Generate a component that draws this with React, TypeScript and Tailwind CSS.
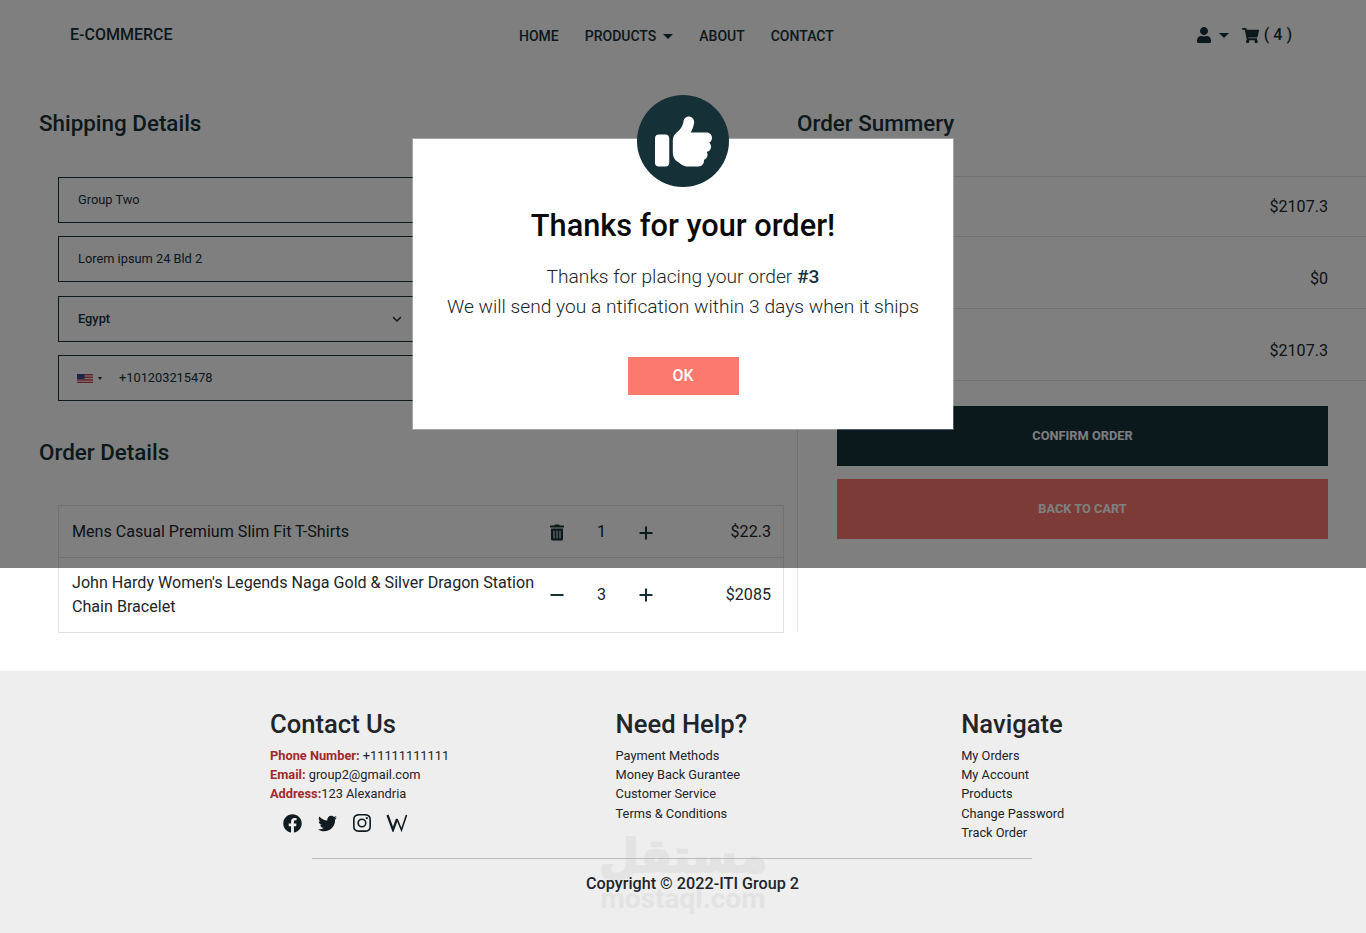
import React from 'react';
import { FaUser, FaShoppingCart, FaTrashAlt, FaFacebook, FaTwitter } from 'react-icons/fa';
import { FaThumbsUp } from 'react-icons/fa6';
import { BsInstagram } from 'react-icons/bs';

const Caret: React.FC = () => (
  <span className="ml-[7px] inline-block h-0 w-0 border-x-[5px] border-t-[5px] border-x-transparent border-t-current" />
);

const UsFlag: React.FC = () => (
  <svg width="16" height="9" viewBox="0 0 16 9">
    <rect width="16" height="9" fill="#c8424f" />
    <rect y="1.4" width="16" height="1.2" fill="#f0e4e4" />
    <rect y="4" width="16" height="1.2" fill="#f0e4e4" />
    <rect y="6.6" width="16" height="1.2" fill="#f0e4e4" />
    <rect width="7.5" height="5" fill="#3c4a8c" />
  </svg>
);

const PlusIcon: React.FC = () => (
  <svg className="shrink-0" width="14" height="14" viewBox="0 0 14 14" stroke="#163038" strokeWidth="2">
    <path d="M7 .5v13M.5 7h13" />
  </svg>
);

const MinusIcon: React.FC = () => (
  <svg className="shrink-0" width="14" height="14" viewBox="0 0 14 14" stroke="#163038" strokeWidth="2">
    <path d="M.5 7h13" />
  </svg>
);

const Field: React.FC<{ children: React.ReactNode }> = ({ children }) => (
  <div className="flex h-[46px] w-[359px] items-center border border-[#163038] pl-[19px] text-[12.8px] text-[#163038]">
    {children}
  </div>
);

const SummaryRow: React.FC<{ label: string; value: string; tall?: boolean }> = ({ label, value, tall }) => (
  <div className={`flex items-center justify-between border-t border-[#dee2e6] pl-[39px] pr-[38px] text-[16.1px] text-[#212529] ${tall ? 'h-[72px] pt-[14px]' : 'h-[60px] pt-[2px]'}`}>
    <span>{label}</span>
    <span>{value}</span>
  </div>
);

const FooterColumn: React.FC<{ title: string; items: string[] }> = ({ title, items }) => (
  <div className="w-[345.6px]">
    <h3 className="mb-[5px] text-[25.6px] leading-[34px] font-medium text-[#212529]">{title}</h3>
    <ul className="text-[12.8px] leading-[19.2px] text-[#212529]">
      {items.map(item => (
        <li key={item}>{item}</li>
      ))}
    </ul>
  </div>
);

const App: React.FC = () => {
  return (
    <div className="relative w-[1366px] bg-white font-['Roboto',sans-serif]">
      <nav className="flex h-[70px] items-center pl-[70px] pr-[74px] text-[#163038]">
        <a className="w-[449px] text-base font-medium">E-COMMERCE</a>
        <ul className="mt-[2px] flex gap-[26px] text-sm font-medium uppercase">
          <li>Home</li>
          <li className="flex items-center">Products<Caret /></li>
          <li>About</li>
          <li>Contact</li>
        </ul>
        <div className="ml-auto flex items-center">
          <FaUser className="text-[16px]" />
          <Caret />
          <FaShoppingCart className="ml-[13px] text-[17px]" />
          <span className="ml-[5px] text-base font-medium">( 4 )</span>
        </div>
      </nav>

      <main className="flex h-[562px]">
        <section className="w-[797px] pl-[39px] pt-[39px]">
          <h2 className="text-[22.4px] leading-[29px] font-medium text-[#163038]">Shipping Details</h2>
          <form className="ml-[19px] mt-[38.5px] flex flex-col gap-[13.5px]">
            <Field>Group Two</Field>
            <Field>Lorem ipsum 24 Bld 2</Field>
            <Field>
              <span className="font-medium">Egypt</span>
              <svg className="ml-auto mr-[11px]" width="16" height="16" viewBox="0 0 16 16" fill="none" stroke="#163038" strokeWidth="1.5" strokeLinecap="round" strokeLinejoin="round">
                <path d="m4.5 6.5 3.5 3.5 3.5-3.5" />
              </svg>
            </Field>
            <Field>
              <span className="-ml-px flex items-center">
                <UsFlag />
              </span>
              <span className="ml-[5px] h-0 w-0 border-x-[2px] border-t-[3px] border-x-transparent border-t-[#163038]" />
              <span className="ml-[17px]">+101203215478</span>
            </Field>
          </form>
          <h2 className="mt-[37px] text-[22.4px] leading-[29px] font-medium text-[#163038]">Order Details</h2>
          <div className="ml-[19px] mt-[38px] w-[726px] border border-[#dee2e6] text-[16.1px] text-[#212529]">
            <div className="flex h-[52px] items-center border-b border-[#dee2e6] pl-[13px] pr-[12px] pt-[2px]">
              <span className="w-[471px] shrink-0">Mens Casual Premium Slim Fit T-Shirts</span>
              <FaTrashAlt className="ml-[7px] w-[14px] shrink-0 text-[17px] text-[#163038]" />
              <span className="w-[75px] text-center">1</span>
              <PlusIcon />
              <span className="ml-auto">$22.3</span>
            </div>
            <div className="flex h-[74px] items-center pl-[13px] pr-[12px]">
              <span className="w-[471px] shrink-0 leading-6">John Hardy Women's Legends Naga Gold &amp; Silver Dragon Station Chain Bracelet</span>
              <span className="ml-[7px] flex">
                <MinusIcon />
              </span>
              <span className="w-[75px] text-center">3</span>
              <PlusIcon />
              <span className="ml-auto">$2085</span>
            </div>
          </div>
        </section>

        <section className="flex flex-1 flex-col pt-[39px]">
          <h2 className="text-[22.4px] leading-[29px] font-medium text-[#163038]">Order Summery</h2>
          <div className="mt-[38px] flex-1 border-l border-[#e5e5e5]">
            <div className="border-b border-[#dee2e6]">
              <SummaryRow label="Subtotal" value="$2107.3" />
              <SummaryRow label="Shipping" value="$0" tall />
              <SummaryRow label="Total" value="$2107.3" tall />
            </div>
            <div className="ml-[39px] mr-[38px] mt-[25px] flex flex-col gap-[13px]">
              <button className="h-[60px] bg-[#163038] text-[12.8px] font-bold uppercase text-white">Confirm Order</button>
              <button className="h-[60px] bg-[#fb776e] text-[12.8px] font-bold uppercase text-white">Back to Cart</button>
            </div>
          </div>
        </section>
      </main>

      <footer className="relative mt-[39px] h-[262px] overflow-hidden bg-[#eeeeee] pl-[270px] pt-[36px]">
        <div className="absolute left-[600px] top-[160px] flex w-[166px] flex-col items-center text-[#e3e3e3]">
          <span dir="rtl" className="font-['DejaVu_Sans',sans-serif] text-[46px] leading-[50px] font-bold [-webkit-text-stroke:2px_#e3e3e3]">مستقل</span>
          <span className="mt-[4px] whitespace-nowrap text-[28px] leading-[28px] font-bold">mostaql.com</span>
        </div>

        <div className="relative flex">
          <div className="w-[345.6px]">
            <h3 className="mb-[5px] text-[25.6px] leading-[34px] font-medium text-[#212529]">Contact Us</h3>
            <p className="text-[12.8px] leading-[19.2px] text-[#212529]"><b className="font-bold text-[#9e2a2b]">Phone Number:</b> +11111111111</p>
            <p className="text-[12.8px] leading-[19.2px] text-[#212529]"><b className="font-bold text-[#9e2a2b]">Email:</b> group2@gmail.com</p>
            <p className="text-[12.8px] leading-[19.2px] text-[#212529]"><b className="font-bold text-[#9e2a2b]">Address:</b>123 Alexandria</p>
            <div className="ml-[13px] mt-[10px] flex items-center gap-[16px] text-[19px] text-[#111c20]">
              <FaFacebook />
              <FaTwitter />
              <BsInstagram className="text-[18px]" />
              <svg className="-ml-px" width="22" height="18" viewBox="0 0 22 18" fill="none" stroke="currentColor" strokeLinejoin="miter">
                <path d="M1.5 1 7 16 11 5" strokeWidth="2.2" />
                <path d="M11 5 15.5 16 20.5 1" strokeWidth="1.6" />
              </svg>
            </div>
          </div>
          <FooterColumn title="Need Help?" items={['Payment Methods', 'Money Back Gurantee', 'Customer Service', 'Terms & Conditions']} />
          <FooterColumn title="Navigate" items={['My Orders', 'My Account', 'Products', 'Change Password', 'Track Order']} />
        </div>

        <hr className="relative ml-[42px] mt-[16px] w-[720px] border-[#bbbbbb]" />
        <p className="relative ml-[316px] mt-[13px] text-[16.2px] font-medium text-[#212529]">Copyright © 2022-ITI Group 2</p>
      </footer>

      <div className="absolute inset-x-0 top-0 flex h-[568px] items-center justify-center bg-black/50">
        <div className="relative h-[290px] w-[540px] bg-white pt-[68px] text-center shadow-[0_0_0_1px_rgba(255,255,255,0.3)]">
          <div className="absolute left-1/2 top-[-44px] flex h-[92px] w-[92px] -translate-x-1/2 items-center justify-center rounded-full bg-[#163038]">
            <FaThumbsUp className="text-[57px] text-white" />
          </div>
          <h2 className="text-[30.72px] leading-[38px] font-medium text-[#0a0a0a]">Thanks for your order!</h2>
          <div className="mt-[17px] text-[19.2px] leading-[30px] font-light text-[#212529]">
            <p>Thanks for placing your order <b className="font-medium text-[#163038]">#3</b></p>
            <p>We will send you a ntification within 3 days when it ships</p>
          </div>
          <button className="mt-[35px] h-[38px] w-[111px] bg-[#fb7a6d] text-base font-medium text-white">OK</button>
        </div>
      </div>
    </div>
  );
};

export default App;
